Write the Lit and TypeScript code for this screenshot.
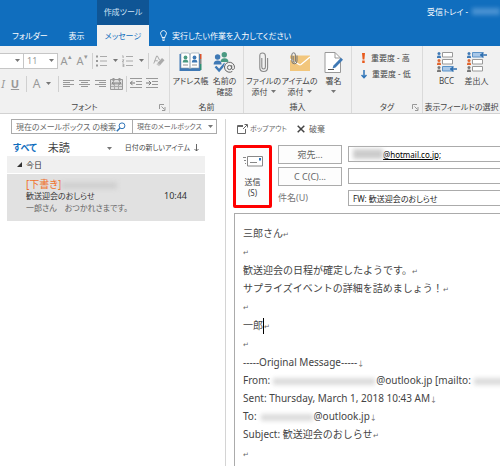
import { LitElement, html, css, svg, nothing } from "lit";
import { customElement } from "lit/decorators.js";

const caret = html`<svg class="caret" width="5" height="3" viewBox="0 0 5 3"><path d="M0 0h5L2.5 3z" fill="#777" /></svg>`;
const launcher = html`<svg width="7" height="7" viewBox="0 0 7 7" fill="none" stroke="#999"><path d="M.5 5V.5H5M2.5 2.5L5.5 5.5M6 3v3.5H3" /></svg>`;

const person = (x: number, y: number, color: string) =>
  svg`<circle cx=${x + 2} cy=${y + 1.6} r="1.5" fill=${color} /><path d="M${x} ${y + 6}v-1.2q0-1.4 2-1.4t2 1.4V${y + 6}z" fill=${color} />`;

const alignIcon = (rows: number[][]) => html`<svg width="11" height="10" viewBox="0 0 11 10" stroke="#999">
  ${rows.map(([a, b], i) => svg`<path d="M${a} ${i * 2 + 1.5}H${b}" />`)}
</svg>`;

const indentIcon = (dir: number) => html`<svg width="12" height="11" viewBox="0 0 12 11" fill="none" stroke="#999">
  <path d="M0 .5H12M6 3.5h6M6 6.5h6M0 9.5H12" />
  ${dir < 0 ? svg`<path d="M0 5H5M2.5 2.8L.5 5l2 2.2" stroke="#777" />` : svg`<path d="M0 5H5M2.8 2.8L5 5 2.8 7.2" stroke="#777" />`}
</svg>`;

const bullets = html`<svg width="11" height="12" viewBox="0 0 11 12" stroke="#aaa">
  <path d="M4 1.5h7M4 6h7M4 10.5h7" /><path d="M0 1.5h2M0 6h2M0 10.5h2" stroke="#999" stroke-width="2" />
</svg>`;
const numbers = html`<svg width="11" height="12" viewBox="0 0 11 12" fill="none" stroke="#aaa">
  <path d="M4 1.5h7M4 6h7M4 10.5h7" /><path d="M.3 .8h.8V3M.3 4.8h1.6L.3 7H2M.3 9h1.5v3H.3M.6 10.5h1" stroke="#999" stroke-width=".8" />
</svg>`;
const eraser = html`<svg width="12" height="12" viewBox="0 0 12 12" fill="none">
  <path d="M.8 8.5L3.6 1h.8L6.5 5M1.8 5.8h3" stroke="#aaa" /><path d="M4.5 8L9 3l2.5 2.3L7 10.3z" fill="#aaa" /><path d="M4.5 8L7 10.3l-1 1-2.6-2z" fill="#c4c4c4" />
</svg>`;
const gridIcon = html`<svg width="13" height="12" viewBox="0 0 13 12" fill="none" stroke="#999">
  <path d="M.5 1.500h12v10H.5z" fill="#ddd" /><path d="M3.500 0v3M9.500 0v3" stroke-width="2" />
  <path d="M1 6h11M1 8.500h11M4.500 5v6M8.500 5v6" stroke="#aaa" /><path d="M2 5h9M4 3.500L2 5l2 1.500M9 3.500L11 5 9 6.500" stroke="#888" />
</svg>`;

const addressBook = html`<svg width="23" height="20" viewBox="0 0 23 20">
  <path d="M.5 2h21v17H.5z" fill="#3f79b5" />
  <path d="M21 2h1.5v5H21z" fill="#d9532c" /><path d="M21 7h1.5v5H21z" fill="#888" /><path d="M21 12h1.5v6H21z" fill="#2f8f74" />
  <path d="M2 1h7q2 0 2 2v14q0-1-2-1H2zM20 1h-7q-2 0-2 2v14q0-1 2-1h7z" fill="#fff" stroke="#8a9aa8" stroke-width=".6" />
  <circle cx="6.5" cy="5.4" r="1.9" fill="#4a9a82" /><path d="M3.7 10.5q0-3 2.8-3t2.8 3z" fill="#4a9a82" /><path d="M4 13h5" stroke="#777" stroke-width=".8" />
  <circle cx="15.5" cy="5.4" r="1.9" fill="#3f79b5" /><path d="M12.8 10.5q0-3 2.8-3t2.8 3z" fill="#3f79b5" /><path d="M13 13h5" stroke="#777" stroke-width=".8" />
</svg>`;
const checkNames = html`<svg width="23" height="22" viewBox="0 0 23 22">
  <circle cx="11.3" cy="2.8" r="2.7" fill="#4a9a82" /><path d="M7.5 10q0-3.8 4-3.8t4 3.8z" fill="#4a9a82" />
  <circle cx="4.6" cy="5" r="2.7" fill="#3f79b5" /><path d="M.6 12.6q0-4.2 4-4.2t4 4.2z" fill="#3f79b5" />
  <path d="M2.5 14.5l3.6 4 6-7" fill="none" stroke="#3f79b5" stroke-width="2.4" />
  <circle cx="16.5" cy="15.5" r="6" fill="#f1f1f1" />
  <circle cx="16.5" cy="15.5" r="2.1" fill="none" stroke="#666" /><path d="M18.7 13.2v3.4q.4 1.3 1.7.9 1.1-.7 1.1-2.2a5 5 0 1 0-2.2 4.1" fill="none" stroke="#666" />
</svg>`;
const clip = html`<svg width="10" height="21" viewBox="0 0 10 21" fill="none" stroke="#888" stroke-width="1.1">
  <path d="M2.8 6v9q0 2 1.8 2t1.8-2V4q0-3-2.9-3T.8 4v11.500q0 4 3.900 4t3.900-4V6" />
</svg>`;
const itemClip = html`<svg width="22" height="20" viewBox="0 0 22 20" fill="none">
  <path d="M1 3.500h20V19H1z" fill="#f2c67c" /><path d="M1 7l9 5.500q1 .6 2 0L21 5" stroke="#fff" stroke-width="1.300" />
  <path d="M4.200 4v5q0 1.200 1.100 1.200T6.400 9V3q0-2.200-1.800-2.200T2.800 3v6q0 2.800 2.600 2.800T8 9V3.500" stroke="#777" />
</svg>`;
const signature = html`<svg width="20" height="21" viewBox="0 0 20 21">
  <path d="M1 .5h10L16.500 6v14.500H1z" fill="#fff" stroke="#999" /><path d="M11 .5V6h5.500" fill="none" stroke="#999" />
  <path d="M4 17.500h6" stroke="#555" /><path d="M8.500 16.500l1-3L17 5.800l2 2L11.500 15.500z" fill="#3f79b5" />
</svg>`;
const fieldsIcon = (active: number) => html`<svg width="21" height="20" viewBox="0 0 21 20">
  ${person(1, 0, "#3f79b5")}${person(1, 7, "#e0662f")}${person(1, 14, "#777")}
  ${[0, 7, 14].map((y, i) => svg`<path d="M6.500 ${y + 0.5}h10v4.500h-10z" fill=${i === active ? "#a9c8e8" : "#fff"} stroke=${i === active ? "#5c93c8" : "#999"} />`)}
  <path d="M14 ${active * 7 + 3}h7M17.500 ${active * 7 + 0.5}L15 ${active * 7 + 3}l2.500 2.500" stroke="#2f6fb0" stroke-width="1.400" fill="none" />
</svg>`;

@customElement("app-root")
export class AppRoot extends LitElement {
  static styles = css`
    :host {
      display: flex;
      flex-direction: column;
      min-height: 100vh;
      background: #fff;
      color: #444;
      font: 8px/12px "Noto Sans", "Noto Sans CJK JP", sans-serif;
      font-feature-settings: "palt";
      overflow: hidden;
    }
    * { box-sizing: border-box; }
    svg { display: block; flex: none; }
    button, input, select {
      font: inherit;
      font-feature-settings: inherit;
      color: inherit;
      background: none;
      border: 0;
      margin: 0;
      padding: 0;
      min-width: 0;
      appearance: none;
      border-radius: 0;
      outline: 0;
    }
    .smudge {
      display: inline-block;
      height: 7px;
      background: #dcdcdc;
      filter: blur(2px);
      vertical-align: middle;
    }

    .top {
      display: grid;
      grid-template: 25px 21px / 56px 41px 52px 1fr;
      background: #106ebe;
      color: #fff;
      flex: none;
    }
    .top button { grid-row: 2; }
    .top .first { padding-left: 4px; }
    .context {
      grid-area: 1 / 3;
      background: #0f5595;
      color: #cfe3f5;
      text-align: center;
      line-height: 23px;
    }
    .top .active { background: #f1f1f1; color: #106ebe; grid-column: 3; }
    .title {
      grid-area: 1 / 4;
      display: flex;
      justify-content: flex-end;
      align-items: center;
      gap: 4px;
      padding-bottom: 2px;
      overflow: hidden;
    }
    .title .smudge { width: 28px; background: #4a92d2; }
    .tell { display: flex; align-items: center; gap: 5px; padding-left: 11px; }

    .ribbon {
      display: flex;
      height: 68px;
      flex: none;
      background: #f1f1f1;
      border-bottom: 1px solid #d2d2d2;
      overflow: hidden;
    }
    .group {
      display: flex;
      flex-direction: column;
      flex: none;
      padding-top: 6px;
      border-right: 1px solid #dadada;
    }
    .group:last-child { flex: 1 0 auto; border: 0; }
    .tools { display: flex; height: 49px; justify-content: center; }
    .foot { display: grid; grid-template-columns: 10px 1fr 10px; align-items: center; height: 12px; text-align: center; }
    .foot.bare { display: block; }
    .big { display: flex; flex-direction: column; align-items: center; line-height: 11px; white-space: nowrap; }
    .pic { display: flex; height: 22px; margin-bottom: 1px; }
    .w36 { width: 36px; }
    .w32 { width: 32px; }
    .w30 { width: 30px; }
    .second { display: flex; align-items: center; gap: 3px; height: 11px; }
    .font { width: 170px; }
    .names { width: 74px; }
    .insert { width: 108px; }
    .tags { width: 71px; }
    .rows { flex-direction: column; justify-content: flex-start; gap: 6px; }
    .row { display: flex; align-items: center; height: 17px; color: #999; }
    .row button { display: flex; align-items: center; justify-content: center; width: 16px; height: 16px; gap: 6px; font-size: 11px; }
    .row .drop { width: 26px; }
    .row .clear { width: 18px; }
    .row .edge { width: 6px; font-style: italic; }
    .row .under { width: 18px; text-decoration: underline; font-weight: bold; }
    .row .tint { width: 28px; font-size: 12px; }
    .row sup { font-size: 7px; line-height: 7px; align-self: flex-start; }
    .row button.size { gap: 0; }
    .sep { width: 1px; height: 16px; margin: 0 1px 0 2px; background: #d0d0d0; }
    .pick {
      display: flex;
      align-items: center;
      background: #fff;
      border: 1px solid #c6c6c6;
      padding-right: 3px;
      height: 16px;
    }
    .pick select { flex: 1; }
    .face { width: 24px; border-left: 0; }
    .points { width: 34px; border-left: 0; padding-left: 3px; font-size: 9px; }
    .levels { flex-direction: column; justify-content: flex-start; gap: 4px; padding-left: 8px; }
    .level { display: flex; align-items: center; gap: 4px; height: 12px; }
    .level svg { margin: 0 1px; }

    .main { display: flex; flex: 1; padding-top: 4px; }
    .list { flex: none; width: 226px; padding-left: 7px; border-right: 1px solid #d4d4d4; margin-top: 1px; }
    .search {
      display: flex;
      height: 15px;
      margin: 0 8px 0 4px;
      border: 1px solid #ababab;
      color: #666;
    }
    .query { display: flex; align-items: center; flex: 1; padding: 0 6px 0 4px; border-right: 1px solid #ababab; }
    .query input { flex: 1; width: 90px; }
    .query input::placeholder { color: #666; opacity: 1; }
    .scope { display: flex; align-items: center; width: 83px; padding: 0 3px 0 4px; font-size: 7px; }
    .scope select { flex: 1; }
    .filters { display: flex; align-items: center; height: 22px; padding: 6px 0 0 6px; }
    .all { font-size: 9px; font-weight: bold; color: #106ebe; }
    .filters .unread { font-size: 11px; margin-left: 11px; }
    .filters .caret { margin: 0 13px 0 auto; }
    .filters .sort { display: flex; align-items: center; gap: 4px; margin-right: 26px; font-size: 7px; }
    .day { display: flex; align-items: center; gap: 4px; width: 198px; height: 17px; padding-left: 10px; background: #f0f0f0; color: #333; }
    .mail {
      display: grid;
      grid-template-columns: 1fr auto;
      width: 198px;
      margin-top: 1px;
      padding: 4px 18px 4px 19px;
      height: 47px;
      background: #e1e1e1;
      align-content: start;
      line-height: 12px;
      text-decoration: none;
      color: #333;
    }
    .draft { grid-column: 1 / 3; font-size: 10px; line-height: 12px; color: #f0702a; }
    .draft .smudge { width: 56px; background: #d0d0d0; }
    .time { font-size: 9px; }
    .preview { grid-column: 1 / 3; color: #666; }

    .compose { display: flex; flex-direction: column; flex: 1; min-width: 0; padding-left: 7px; }
    .actions { display: flex; gap: 10px; height: 22px; padding-left: 4px; color: #666; }
    .actions button { display: flex; align-items: center; gap: 4px; }
    .actions .pop { font-size: 7px; gap: 2px; }
    .head { display: grid; grid-template-columns: 39px 64px 1fr; column-gap: 6px; margin-top: 5px; flex: none; }
    .send {
      display: flex;
      flex-direction: column;
      align-items: center;
      justify-content: center;
      height: 63px;
      border: 3px solid #f00;
      border-radius: 2px;
      background: #fdfdfd;
      line-height: 11px;
    }
    .send svg { margin-bottom: 9px; }
    .labels, .fields { display: flex; flex-direction: column; gap: 3px; }
    .labels button { height: 19px; border: 1px solid #ababab; background: #fdfdfd; font-size: 9px; color: #666; }
    .labels label { line-height: 17px; font-size: 9px; color: #777; }
    .fields { gap: 6px; padding-top: 1px; }
    .field { display: flex; align-items: center; height: 16px; border: 1px solid #ababab; border-right: 0; padding-left: 4px; color: #222; }
    .field input { flex: 1; height: 13px; }
    .field .smudge { width: 30px; height: 10px; background: #ccc; }
    .field .address { text-decoration: underline; color: #000; }
    .text {
      flex: 1;
      margin: 5px 0 0 1px;
      padding: 10px 0 0 8px;
      border: 1px solid #ababab;
      border-width: 1px 0 0 1px;
      font-size: 10px;
      line-height: 18px;
      font-feature-settings: normal;
      white-space: nowrap;
      overflow: hidden;
      outline: 0;
      color: #444;
    }
    .text p { margin: 0; height: 18px; }
    .text .original { height: 91px; }
    .text .blank { height: 19px; }
    .mark { font-size: 7px; line-height: 0; color: #666; }
    .cursor { display: inline-block; width: 1px; height: 16px; background: #000; vertical-align: middle; }
    .text .from { width: 102px; margin: 0 1px 0 3px; }
    .text .to { width: 52px; margin: 0 1px 0 4px; }
    .text .reply { width: 60px; margin-left: 3px; }
  `;

  private big(icon: unknown, first: string, second: unknown, size: string) {
    return html`<button class="big ${size}">
      <span class="pic">${icon}</span><span>${first}</span>${second === nothing ? nothing : html`<span class="second">${second}</span>`}
    </button>`;
  }

  private get ret() {
    return html`<span class="mark">↵</span>`;
  }

  private get brk() {
    return html`<span class="mark">↓</span><br />`;
  }

  render() {
    return html`
      <header class="top">
        <div class="context">作成ツール</div>
        <div class="title">受信トレイ -<span class="smudge"></span></div>
        <button class="first">フォルダー</button>
        <button>表示</button>
        <button class="active">メッセージ</button>
        <button class="tell">
          <svg width="7" height="11" viewBox="0 0 7 11" fill="none" stroke="#fff"><path d="M2 7.500Q2 6 1.200 5.200A2.900 2.900 0 1 1 5.800 5.200Q5 6 5 7.500zM2 9h3M2.500 10.500h2" stroke-width=".9" /></svg>
          実行したい作業を入力してください
        </button>
      </header>

      <section class="ribbon">
        <div class="group font">
          <div class="tools rows">
            <div class="row">
              <span class="pick face"><select aria-label="フォント"></select>${caret}</span>
              <span class="pick points"><select aria-label="サイズ"><option>11</option></select>${caret}</span>
              <button class="size">A<sup>▴</sup></button>
              <button class="size">A<sup>▾</sup></button>
              <span class="sep"></span>
              <button class="drop">${bullets}${caret}</button>
              <button class="drop">${numbers}${caret}</button>
              <span class="sep"></span>
              <button class="clear">${eraser}</button>
            </div>
            <div class="row">
              <button class="edge">I</button>
              <button class="under">U</button>
              <span class="sep"></span>
              <button class="tint">A${caret}</button>
              <span class="sep"></span>
              <button>${alignIcon([[0, 11], [0, 7], [0, 11], [0, 7]])}</button>
              <button>${alignIcon([[0, 11], [2, 9], [0, 11], [2, 9]])}</button>
              <button>${alignIcon([[0, 11], [4, 11], [0, 11], [4, 11]])}</button>
              <button>${gridIcon}</button>
              <span class="sep"></span>
              <button>${indentIcon(-1)}</button>
              <button>${indentIcon(1)}</button>
            </div>
          </div>
          <div class="foot"><span></span><span>フォント</span>${launcher}</div>
        </div>
        <div class="group names">
          <div class="tools">
            ${this.big(addressBook, "アドレス帳", nothing, "w36")}
            ${this.big(checkNames, "名前の", "確認", "w32")}
          </div>
          <div class="foot bare">名前</div>
        </div>
        <div class="group insert">
          <div class="tools">
            ${this.big(clip, "ファイルの", html`添付${caret}`, "w36")}
            ${this.big(itemClip, "アイテムの", html`添付${caret}`, "w36")}
            ${this.big(signature, "署名", caret, "w32")}
          </div>
          <div class="foot bare">挿入</div>
        </div>
        <div class="group tags">
          <div class="tools levels">
            <button class="level">
              <svg width="5" height="10" viewBox="0 0 5 10"><path d="M1 0h3l-.6 6.500H1.600zM1.200 7.500h2.500V10H1.200z" fill="#e85a1c" /></svg>重要度 - 高
            </button>
            <button class="level">
              <svg width="6" height="9" viewBox="0 0 6 9" fill="none" stroke="#2f74b8" stroke-width="1.500"><path d="M3 0v8M.5 5L3 7.700 5.500 5" /></svg>重要度 - 低
            </button>
          </div>
          <div class="foot"><span></span><span>タグ</span>${launcher}</div>
        </div>
        <div class="group">
          <div class="tools">
            ${this.big(fieldsIcon(2), "BCC", nothing, "w30")}
            ${this.big(fieldsIcon(0), "差出人", nothing, "w30")}
          </div>
          <div class="foot bare">表示フィールドの選択</div>
        </div>
      </section>

      <main class="main">
        <section class="list">
          <div class="search">
            <label class="query">
              <input placeholder="現在のメールボックス の検索" aria-label="検索" />
              <svg width="10" height="10" viewBox="0 0 10 10" fill="none" stroke="#2f74b8"><circle cx="6" cy="3.800" r="2.900" /><path d="M4 6L.8 9.200" stroke-width="1.500" /></svg>
            </label>
            <label class="scope"><select aria-label="範囲"><option>現在のメールボックス</option></select>${caret}</label>
          </div>
          <div class="filters">
            <button class="all">すべて</button>
            <button class="unread">未読</button>
            ${caret}
            <button class="sort">日付の新しいアイテム
              <svg width="5" height="8" viewBox="0 0 5 8" fill="none" stroke="#555"><path d="M2.500 0v7M.5 5l2 2 2-2" stroke-width=".9" /></svg>
            </button>
          </div>
          <div class="day"><svg width="5" height="5" viewBox="0 0 5 5"><path d="M5 0v5H0z" fill="#333" /></svg>今日</div>
          <a class="mail" href="#mail">
            <span class="draft">[下書き]<span class="smudge"></span></span>
            <span>歓送迎会のおしらせ</span><span class="time">10:44</span>
            <span class="preview">一郎さん　おつかれさまです。</span>
          </a>
        </section>

        <section class="compose">
          <div class="actions">
            <button class="pop"><svg width="11" height="10" viewBox="0 0 11 10" fill="none" stroke="#666"><path d="M6 1.500H.5v8h8V5" /><path d="M.5 2.500H6M6 5l4-4M7.500.5h3v3" /></svg>ポップアウト</button>
            <button><svg width="8" height="8" viewBox="0 0 8 8" stroke="#444" stroke-width="1.500"><path d="M.7.7l6.600 6.600M7.300.7L.7 7.300" /></svg>破棄</button>
          </div>
          <div class="head">
            <button class="send">
              <svg width="20" height="11" viewBox="0 0 20 11" fill="none" stroke="#888"><path d="M4.500.5h15v9.500h-15z" fill="#fff" /><path d="M0 1.500h3M1 4.500h2M2 7.500h1M7 6.500h7" /><path d="M16 2h2v2.500h-2z" fill="#2f74b8" stroke="none" /></svg>
              <span>送信</span><span>(S)</span>
            </button>
            <div class="labels">
              <button>宛先...</button>
              <button>C C(C)...</button>
              <label for="subject">件名(U)</label>
            </div>
            <div class="fields">
              <div class="field"><span class="smudge"></span><input class="address" aria-label="宛先" value="@hotmail.co.jp;" /></div>
              <div class="field"><input aria-label="CC" /></div>
              <div class="field"><input id="subject" value="FW: 歓送迎会のおしらせ" /></div>
            </div>
          </div>
          <div class="text" role="textbox" aria-multiline="true" aria-label="本文" tabindex="0">
            <p>三郎さん${this.ret}</p>
            <p class="blank">${this.ret}</p>
            <p>歓送迎会の日程が確定したようです。${this.ret}</p>
            <p>サプライズイベントの詳細を詰めましょう！${this.ret}</p>
            <p class="blank">${this.ret}</p>
            <p>一郎<span class="cursor"></span>${this.ret}</p>
            <p class="blank">${this.ret}</p>
            <p class="original">
              -----Original Message-----${this.brk}
              From:<span class="smudge from"></span>@outlook.jp [mailto:<span class="smudge reply"></span><br />
              Sent: Thursday, March 1, 2018 10:43 AM${this.brk}
              To:<span class="smudge to"></span>@outlook.jp${this.brk}
              Subject: 歓送迎会のおしらせ${this.ret}
            </p>
            <p class="blank">${this.ret}</p>
          </div>
        </section>
      </main>
    `;
  }
}
